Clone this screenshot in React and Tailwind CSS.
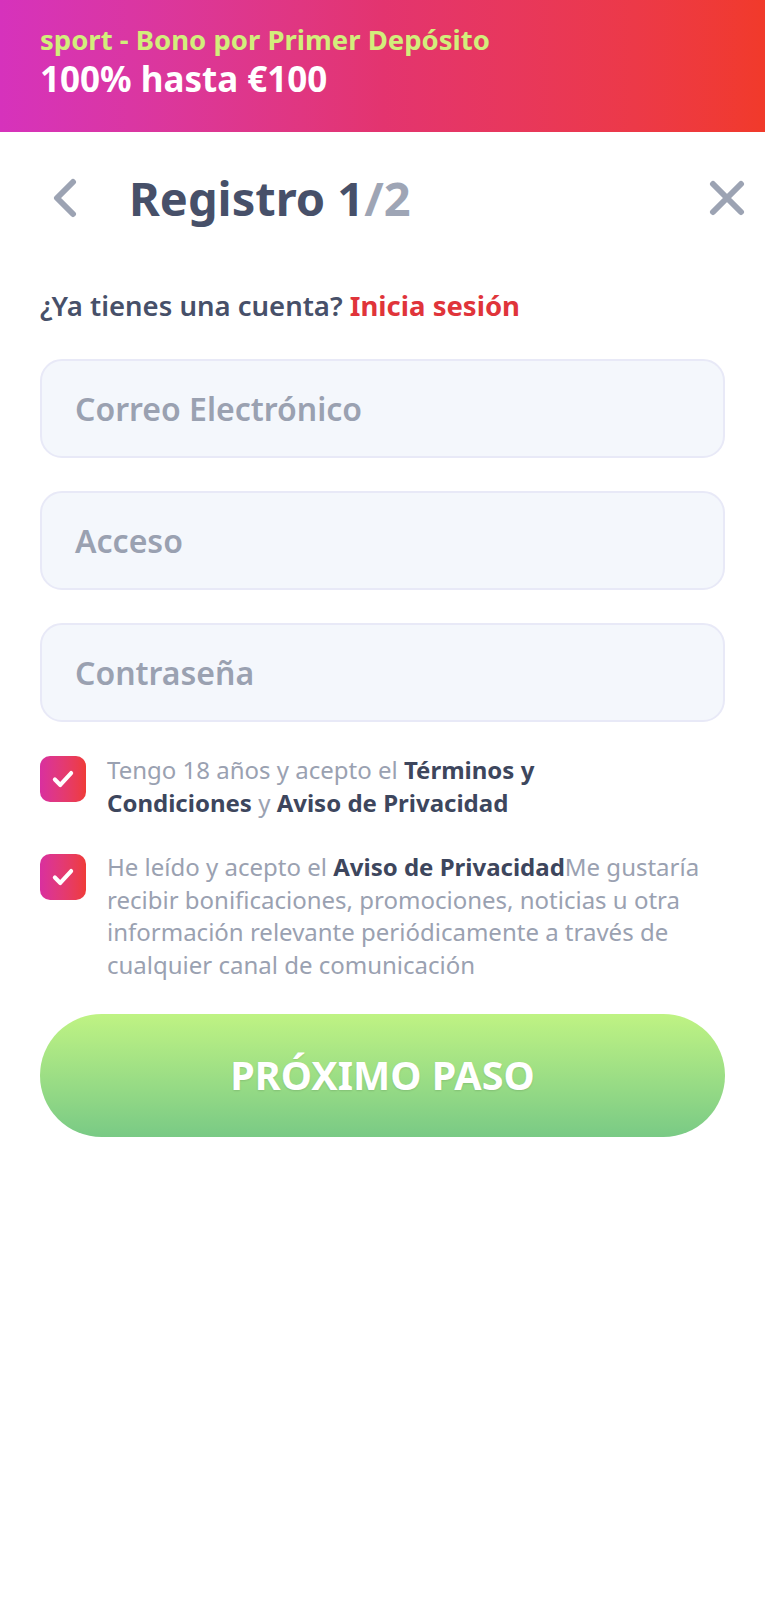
import React from 'react'

const Check = () => (
    <div className="mt-[3px] flex h-[46px] w-[46px] shrink-0 items-center justify-center rounded-[10px] bg-linear-to-r from-[#d92f9f] to-[#ef3b37]">
        <svg width="26" height="26" viewBox="0 0 24 24" fill="none">
            <polyline points="4.5,12.5 9.5,17.5 19.5,6.5" stroke="#fff" strokeWidth="3.8" strokeLinecap="round" strokeLinejoin="round" />
        </svg>
    </div>
)

const Field = ({ placeholder }) => (
    <div className="flex h-[99px] items-center rounded-[22px] border-2 border-[#e8e9f7] bg-[#f4f7fc] px-[33px]">
        <span className="text-[32px] font-semibold text-[#9aa1b1]">{placeholder}</span>
    </div>
)

export default function App() {
    return (
        <div className="min-h-[1600px] bg-white font-['Noto_Sans',sans-serif]">
            {/* Баннер бонуса */}
            <div className="h-[132px] bg-linear-to-r from-[#d632bc] via-[#e3346f] to-[#f13a2a] px-10 pt-[21px]">
                <p className="text-[27.5px] font-bold leading-[37px] text-[#d2ee7b]">sport - Bono por Primer Depósito</p>
                <p className="text-[35px] font-bold leading-[42px] text-white">100% hasta €100</p>
            </div>

            <div className="px-10">
                {/* Заголовок */}
                <div className="mt-[38px] flex h-[56px] items-center">
                    <svg className="ml-[13px]" width="24" height="40" viewBox="0 0 24 40" fill="none">
                        <polyline points="20,4 4,20 20,36" stroke="#9ca3b3" strokeWidth="6" strokeLinecap="round" strokeLinejoin="round" />
                    </svg>
                    <h1 className="ml-[52px] text-[47px] font-bold leading-none text-[#475069]">
                        Registro 1<span className="text-[#9ea5b5]">/2</span>
                    </h1>
                    <svg className="ml-auto mr-[-20px]" width="36" height="36" viewBox="0 0 36 36" fill="none">
                        <path d="M4 4 L32 32 M32 4 L4 32" stroke="#9ca3b3" strokeWidth="6" strokeLinecap="round" />
                    </svg>
                </div>

                <p className="mt-[62px] text-[27.5px] font-semibold leading-[36px] text-[#475069]">
                    ¿Ya tienes una cuenta? <span className="font-bold text-[#e0343a]">Inicia sesión</span>
                </p>

                {/* Поля */}
                <div className="mt-[35px] flex flex-col gap-[33px]">
                    <Field placeholder="Correo Electrónico" />
                    <Field placeholder="Acceso" />
                    <Field placeholder="Contraseña" />
                </div>

                {/* Чекбоксы */}
                <div className="mt-[31px] flex items-start gap-[21px]">
                    <Check />
                    <p className="w-[565px] text-[24px] leading-[33px] text-[#9aa1b1]">
                        Tengo 18 años y acepto el <b className="text-[#3d465d]">Términos y Condiciones</b> y <b className="text-[#3d465d]">Aviso de Privacidad</b>
                    </p>
                </div>
                <div className="mt-[32px] flex items-start gap-[21px]">
                    <Check />
                    <p className="w-[615px] text-[24px] leading-[32.5px] text-[#9aa1b1]">
                        He leído y acepto el <b className="text-[#3d465d]">Aviso de Privacidad</b>Me gustaría recibir bonificaciones, promociones, noticias u otra información relevante periódicamente a través de cualquier canal de comunicación
                    </p>
                </div>

                <button className="mt-[33px] flex h-[123px] w-full items-center justify-center rounded-full bg-linear-to-b from-[#bff383] to-[#79ca85] text-[39.5px] font-bold text-white [text-shadow:0_1px_2px_rgba(0,0,0,0.12)]">
                    PRÓXIMO PASO
                </button>
            </div>
        </div>
    )
}
